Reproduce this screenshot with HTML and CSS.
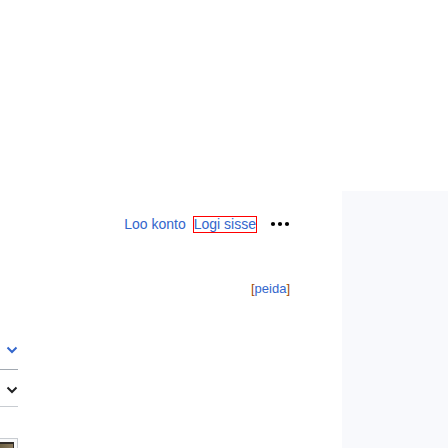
FILE: index.html
```html
<!DOCTYPE html>
<html lang="et">
<head>
<meta charset="utf-8">
<title>Vikipeedia</title>
<link rel="stylesheet" href="styles.css">
</head>
<body>
<div class="page">
  <main class="content">
    <nav class="user-nav" aria-label="Kasutaja">
      <a href="#">Loo konto</a>
      <a href="#" class="login">Logi sisse</a>
      <button type="button" class="more" aria-label="Veel">
        <svg width="20" height="20" viewBox="0 0 20 20" aria-hidden="true"><circle cx="3" cy="10" r="2.100"/><circle cx="10" cy="10" r="2.100"/><circle cx="17" cy="10" r="2.100"/></svg>
      </button>
    </nav>
    <div class="notice">[<a href="#">peida</a>]</div>
    <div class="article">
      <button type="button" class="row languages" aria-label="Keeled">
        <svg width="12" height="12" viewBox="0 0 12 12" aria-hidden="true"><path d="M1.500 3.500 6 8l4.500-4.500"/></svg>
      </button>
      <button type="button" class="row tools" aria-label="Tööriistad">
        <svg width="12" height="12" viewBox="0 0 12 12" aria-hidden="true"><path d="M1.500 3.500 6 8l4.500-4.500"/></svg>
      </button>
      <div class="thumb"><div class="picture"></div></div>
    </div>
  </main>
  <aside class="margin"></aside>
</div>
</body>
</html>
```
FILE: styles.css
```css
* { box-sizing: border-box; }
body {
  margin: 0;
  background: #fff;
  font-family: "Liberation Sans", Arial, sans-serif;
  font-size: 14px;
}
a { color: #36c; text-decoration: none; }
button { border: 0; padding: 0; background: none; font: inherit; }
svg { display: block; }
.page {
  display: grid;
  grid-template-columns: 1fr 106px;
  min-height: 100vh;
  padding-top: 191px;
}
.margin { background: #f8f9fc; }
.content {
  display: flex;
  flex-direction: column;
  padding-top: 23px;
}
.user-nav {
  display: flex;
  justify-content: flex-end;
  align-items: center;
  height: 20px;
  padding-right: 52px;
}
.login {
  margin-left: 7px;
  border: 1px solid #f00;
  line-height: 15px;
}
.more { margin-left: 13px; }
.more circle { fill: #000; }
.notice {
  margin-top: 46px;
  padding-right: 52px;
  text-align: right;
  font-size: 13px;
  line-height: 18px;
  color: #a04a00;
}
.article {
  display: flex;
  flex: 1;
  flex-direction: column;
  width: 18px;
  margin-top: 32px;
}
.row {
  display: flex;
  align-items: center;
  justify-content: flex-end;
  height: 40px;
  border-bottom: 1px solid #a2a9b1;
}
.row path { fill: none; stroke: #36c; stroke-width: 2; }
.tools { height: 37px; padding-top: 4px; border-color: #c8ccd1; }
.tools path { stroke: #202122; }
.thumb {
  display: flex;
  flex: 1;
  margin-top: 31px;
  padding: 3px 3px 0 0;
  border: solid #c8ccd1;
  border-width: 1px 1px 0 0;
  background: #f8f9fa;
}
.picture {
  flex: 1;
  border: solid #302b27;
  border-width: 2px 1px 0 0;
  background: linear-gradient(90deg, #6b6043, #8a795d);
}
```
